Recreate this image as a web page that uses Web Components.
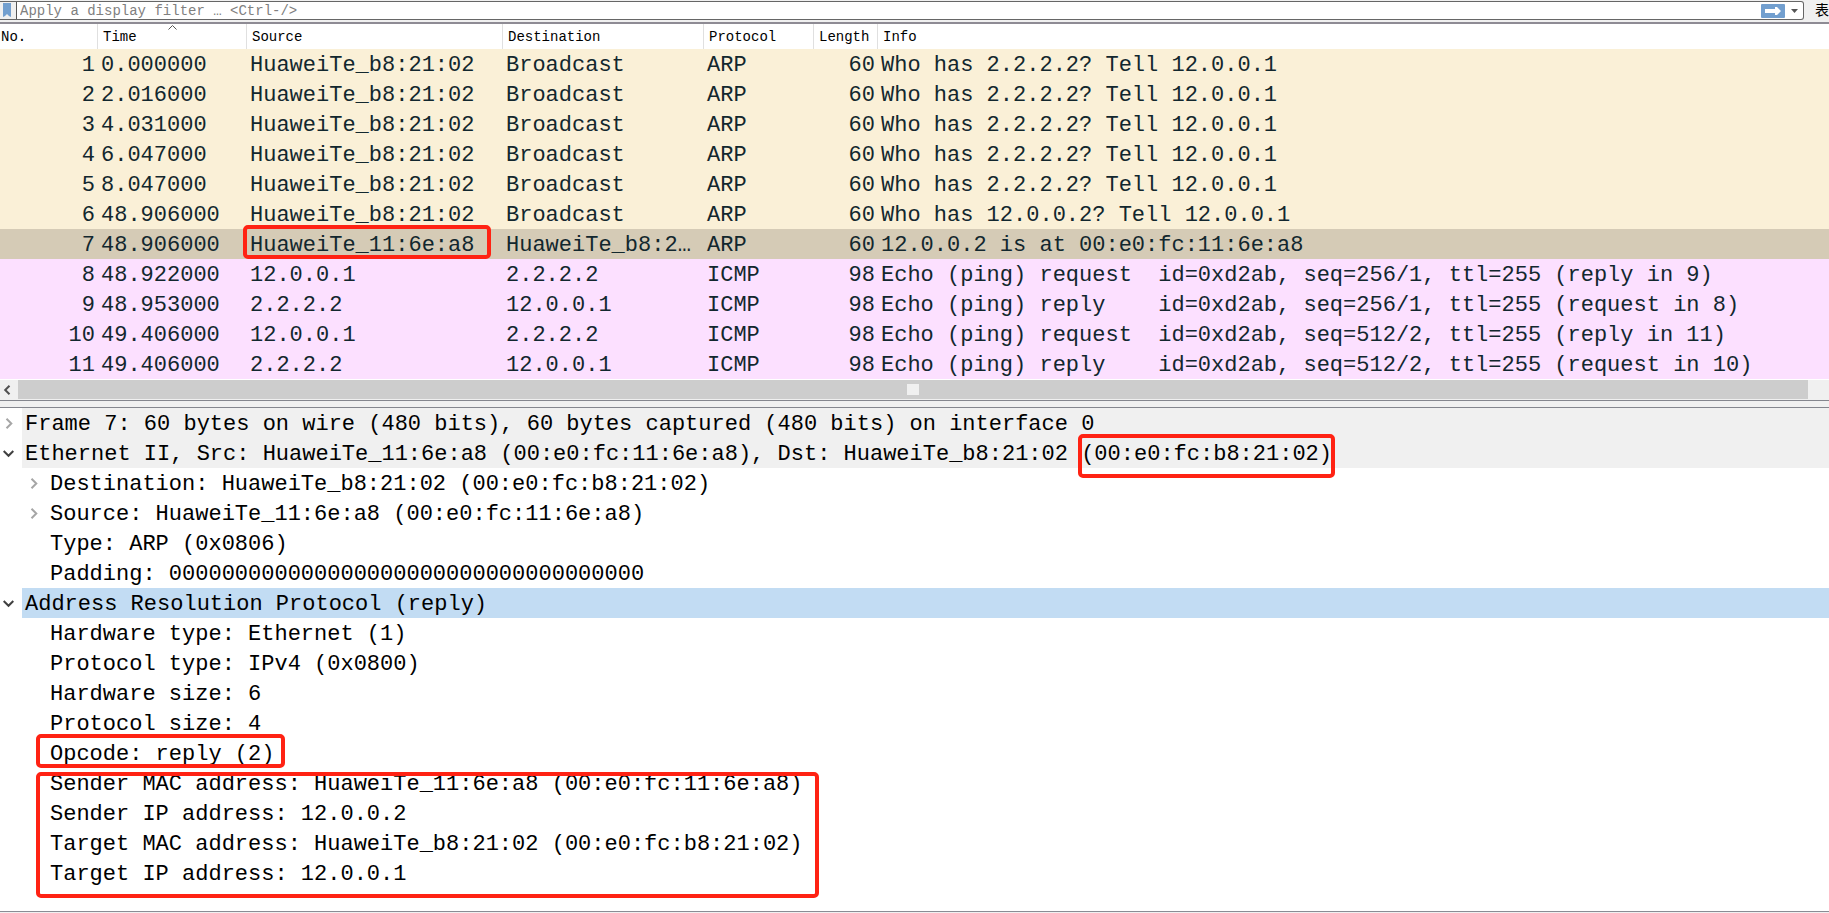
<!DOCTYPE html>
<html lang="en">
<head>
<meta charset="utf-8">
<title>Packet analyzer</title>
<style>
html, body { margin: 0; }
body { font-family: "Liberation Mono", "Noto Sans CJK SC", monospace; background: #f0f0f0; }
</style>
</head>
<body>
<packet-app></packet-app>
<script>
const define = (name, html, setup) => {
  const tpl = document.createElement('template');
  tpl.innerHTML = html;
  customElements.define(name, class extends HTMLElement {
    connectedCallback() {
      if (this.shadowRoot) return;
      const root = this.attachShadow({ mode: 'open' });
      root.append(tpl.content.cloneNode(true));
      if (setup) setup(this, root);
    }
  });
};

/* Red rounded outline drawn over the content it marks */
define('red-mark', `
<style>
:host { position: absolute; box-sizing: border-box; border: 4px solid #ff2213; border-radius: 5px; pointer-events: none; z-index: 2; }
</style>`);

define('filter-bar', `
<style>
:host { display: flex; background: #f0f0f0; border-bottom: 2px solid #8e8b94; box-sizing: border-box; height: 24px; padding-top: 1px; }
form { flex: 1; display: flex; align-items: center; height: 19px; box-sizing: border-box; margin: 0; background: #fff; border: 1px solid #666; border-left: 0; border-radius: 0 3px 3px 0; }
button { border: 0; padding: 0; margin: 0; background: none; display: flex; align-items: center; justify-content: center; height: 17px; }
.mark { width: 16px; background: #f0f0f0; border-right: 1px solid #555; box-sizing: content-box; }
input { flex: 1; min-width: 0; border: 0; outline: 0; padding: 0 3px; height: 17px; background: none; font: 14px "Liberation Mono", monospace; color: #000; }
input::placeholder { color: #808080; opacity: 1; }
.drop { width: 18px; }
.expr { flex: none; padding-left: 11px; font: 14px/17px "Noto Sans CJK SC", sans-serif; color: #000; }
</style>
<form>
  <button class="mark" type="button" aria-label="Bookmarks"><svg width="16" height="17" viewBox="0 0 16 17"><path d="M3 1h8v14l-2-1-2-2-2 2-2 1z" fill="#729fcf"/></svg></button>
  <input type="text" aria-label="Display filter" placeholder="Apply a display filter … &lt;Ctrl-/&gt;">
  <button type="button" aria-label="Apply"><svg width="24" height="14" viewBox="0 0 24 14"><rect width="24" height="14" rx="1" fill="#729fcf"/><path d="M4 5h10V3h2l4 4-4 4h-2V9H4z" fill="#fff"/></svg></button>
  <button class="drop" type="button" aria-label="Recent filters"><svg width="7" height="4" viewBox="0 0 7 4"><path d="M0 0h7L3.500 4z" fill="#555"/></svg></button>
</form>
<button class="expr" type="button">表</button>`);

const packets = [
  ['1','0.000000','HuaweiTe_b8:21:02','Broadcast','ARP','60','Who has 2.2.2.2? Tell 12.0.0.1'],
  ['2','2.016000','HuaweiTe_b8:21:02','Broadcast','ARP','60','Who has 2.2.2.2? Tell 12.0.0.1'],
  ['3','4.031000','HuaweiTe_b8:21:02','Broadcast','ARP','60','Who has 2.2.2.2? Tell 12.0.0.1'],
  ['4','6.047000','HuaweiTe_b8:21:02','Broadcast','ARP','60','Who has 2.2.2.2? Tell 12.0.0.1'],
  ['5','8.047000','HuaweiTe_b8:21:02','Broadcast','ARP','60','Who has 2.2.2.2? Tell 12.0.0.1'],
  ['6','48.906000','HuaweiTe_b8:21:02','Broadcast','ARP','60','Who has 12.0.0.2? Tell 12.0.0.1'],
  ['7','48.906000','HuaweiTe_11:6e:a8','HuaweiTe_b8:2…','ARP','60','12.0.0.2 is at 00:e0:fc:11:6e:a8'],
  ['8','48.922000','12.0.0.1','2.2.2.2','ICMP','98','Echo (ping) request  id=0xd2ab, seq=256/1, ttl=255 (reply in 9)'],
  ['9','48.953000','2.2.2.2','12.0.0.1','ICMP','98','Echo (ping) reply    id=0xd2ab, seq=256/1, ttl=255 (request in 8)'],
  ['10','49.406000','12.0.0.1','2.2.2.2','ICMP','98','Echo (ping) request  id=0xd2ab, seq=512/2, ttl=255 (reply in 11)'],
  ['11','49.406000','2.2.2.2','12.0.0.1','ICMP','98','Echo (ping) reply    id=0xd2ab, seq=512/2, ttl=255 (request in 10)']
];

define('packet-list', `
<style>
:host { display: block; background: #fff; }
table { width: 100%; table-layout: fixed; border-collapse: separate; border-spacing: 0; }
.no { width: 98px; } .time { width: 149px; } .src { width: 256px; } .dst { width: 201px; } .proto { width: 110px; } .len { width: 64px; }
th { position: relative; height: 25px; padding: 2px 0 0 5px; box-sizing: border-box; border-right: 1px solid #e0e0e0; text-align: left; font-weight: 400; font-size: 14px; line-height: 23px; color: #000; }
th:first-child { padding-left: 1px; }
th:last-child { border-right: 0; }
th svg { position: absolute; left: 0; right: 0; top: 1px; margin: 0 auto; }
td { position: relative; height: 30px; box-sizing: border-box; padding: 3px 3px 0 3px; font-size: 22px; line-height: 27px; white-space: pre; color: #12272e; }
td:nth-child(1), td:nth-child(6) { text-align: right; }
tr.arp td { background: #faf0d7; }
tr.selected td { background: #d5cbb6; }
tr.icmp td { background: #fce0ff; }
red-mark { left: -4px; top: -4px; width: 248px; height: 34px; }
</style>
<table>
<colgroup><col class="no"><col class="time"><col class="src"><col class="dst"><col class="proto"><col class="len"><col></colgroup>
<thead><tr><th>No.</th><th>Time<svg width="9" height="5" viewBox="0 0 9 5"><path d="M.5 4.500l4-4 4 4" fill="none" stroke="#555"/></svg></th><th>Source</th><th>Destination</th><th>Protocol</th><th>Length</th><th>Info</th></tr></thead>
<tbody></tbody>
</table>`, (host, root) => {
  const body = root.querySelector('tbody');
  packets.forEach(p => {
    const tr = body.insertRow();
    tr.className = p[0] === '7' ? 'selected' : p[4].toLowerCase();
    p.forEach(text => { tr.insertCell().textContent = text; });
    if (p[0] === '7') tr.cells[2].append(document.createElement('red-mark'));
  });
});

define('scroll-strip', `
<style>
:host { display: flex; height: 20px; box-sizing: border-box; border-top: 1px solid #fff; background: #f0f0f0; padding-right: 21px; }
button { width: 18px; border: 0; padding: 0 4px 0 0; background: none; display: flex; align-items: center; justify-content: center; }
.thumb { flex: 1; height: 19px; background: #cdcdcd; display: flex; align-items: center; justify-content: center; }
.grip { width: 12px; height: 11px; background: #f0f0f0; }
</style>
<button type="button" aria-label="Scroll left"><svg width="8" height="10" viewBox="0 0 8 10"><path d="M6.500 .7l-4.300 4.300 4.300 4.300" fill="none" stroke="#505050" stroke-width="2"/></svg></button>
<div class="thumb"><div class="grip"></div></div>`);

define('tree-row', `
<style>
:host { display: flex; position: relative; height: 30px; font-size: 22px; line-height: 28px; color: #000; }
.arrow { flex: none; width: 22px; display: flex; align-items: center; padding-left: 3px; box-sizing: border-box; }
.text { flex: 1; box-sizing: border-box; padding: 3px 0 0 3px; line-height: 27px; white-space: pre; }
:host([level="1"]) { padding-left: 25px; }
:host([shade]) .text { background: #f0f0f0; }
:host([selected]) .text { background: #c2dcf3; }
svg { display: none; fill: none; stroke-width: 2; }
:host([state="closed"]) .closed { display: block; stroke: #a6a6a6; }
:host([state="open"]) .open { display: block; stroke: #404040; }
</style>
<div class="arrow">
<svg class="closed" width="11" height="11" viewBox="0 0 11 11"><path d="M3.500 .7l4.800 4.800-4.800 4.800"/></svg>
<svg class="open" width="11" height="11" viewBox="0 0 11 11"><path d="M.7 3l4.800 4.800L10.300 3"/></svg>
</div>
<div class="text"><slot></slot></div>`);

define('packet-details', `
<style>
:host { display: block; background: #fff; border-bottom: 1px solid #8a8c94; }
.marked { position: relative; }
.address { left: -3px; top: -8px; width: 257px; height: 44px; }
.opcode { left: 36px; top: -4px; width: 249px; height: 34px; }
.hosts { position: relative; }
.hosts red-mark { left: 36px; top: 4px; width: 783px; height: 126px; }
</style>
<tree-row shade state="closed">Frame 7: 60 bytes on wire (480 bits), 60 bytes captured (480 bits) on interface 0</tree-row>
<tree-row shade state="open">Ethernet II, Src: HuaweiTe_11:6e:a8 (00:e0:fc:11:6e:a8), Dst: HuaweiTe_b8:21:02 <span class="marked">(00:e0:fc:b8:21:02)<red-mark class="address"></red-mark></span></tree-row>
<tree-row level="1" state="closed">Destination: HuaweiTe_b8:21:02 (00:e0:fc:b8:21:02)</tree-row>
<tree-row level="1" state="closed">Source: HuaweiTe_11:6e:a8 (00:e0:fc:11:6e:a8)</tree-row>
<tree-row level="1">Type: ARP (0x0806)</tree-row>
<tree-row level="1">Padding: 000000000000000000000000000000000000</tree-row>
<tree-row selected state="open">Address Resolution Protocol (reply)</tree-row>
<tree-row level="1">Hardware type: Ethernet (1)</tree-row>
<tree-row level="1">Protocol type: IPv4 (0x0800)</tree-row>
<tree-row level="1">Hardware size: 6</tree-row>
<tree-row level="1">Protocol size: 4</tree-row>
<tree-row level="1">Opcode: reply (2)<red-mark class="opcode"></red-mark></tree-row>
<div class="hosts">
<tree-row level="1">Sender MAC address: HuaweiTe_11:6e:a8 (00:e0:fc:11:6e:a8)</tree-row>
<tree-row level="1">Sender IP address: 12.0.0.2</tree-row>
<tree-row level="1">Target MAC address: HuaweiTe_b8:21:02 (00:e0:fc:b8:21:02)</tree-row>
<tree-row level="1">Target IP address: 12.0.0.1</tree-row>
<red-mark></red-mark>
</div>`);

define('packet-app', `
<style>
:host { display: flex; flex-direction: column; min-height: 100vh; box-sizing: border-box; padding-bottom: 1px; }
.splitter { height: 8px; box-sizing: border-box; margin-top: 1px; border-top: 1px solid #84868e; border-bottom: 1px solid #84868e; background: #f0f0f0; }
packet-details { flex: 1; }
</style>
<filter-bar></filter-bar>
<packet-list></packet-list>
<scroll-strip></scroll-strip>
<div class="splitter"></div>
<packet-details></packet-details>`);
</script>
</body>
</html>
